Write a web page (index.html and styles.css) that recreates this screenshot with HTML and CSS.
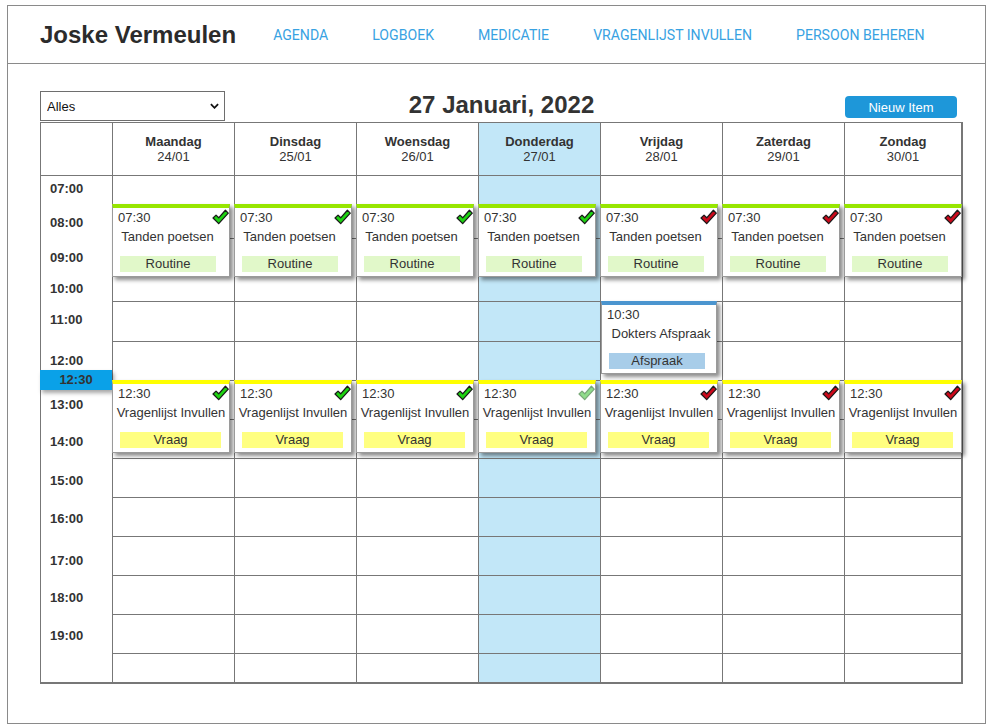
FILE: index.html
```html
<!DOCTYPE html>
<html lang="nl">

<head>
  <meta charset="UTF-8">
  <meta name="viewport" content="width=device-width, initial-scale=1.0">
  <title>Agenda - Joske Vermeulen</title>
  <link rel="stylesheet" href="styles.css">
</head>

<body>

  <svg class="defs" width="0" height="0">
    <symbol id="check" viewBox="0 0 16 16">
      <polygon points="1,8.5 3.8,5.8 6.3,8.3 12.6,1.2 15.3,3.9 6.3,13.8" />
    </symbol>
  </svg>

  <div class="page">

    <header class="topbar">
      <h1 class="user-name">Joske Vermeulen</h1>
      <nav class="nav">
        <a href="#">AGENDA</a>
        <a href="#">LOGBOEK</a>
        <a href="#">MEDICATIE</a>
        <a href="#">VRAGENLIJST INVULLEN</a>
        <a href="#">PERSOON BEHEREN</a>
      </nav>
    </header>

    <main class="content">

      <div class="toolbar">
        <div class="filter">
          <select id="filter">
            <option>Alles</option>
            <option>Routine</option>
            <option>Afspraak</option>
            <option>Vraag</option>
          </select>
          <svg class="chevron" viewBox="0 0 10 6"><path d="M1 1 L5 5 L9 1" /></svg>
        </div>
        <h2 class="week-title">27 Januari, 2022</h2>
        <button class="btn-new">Nieuw Item</button>
      </div>

      <div class="calendar">

        <!-- kop met dagen -->
        <div class="cal-head">
          <div class="head-cell"></div>
          <div class="head-cell"><b>Maandag</b><span>24/01</span></div>
          <div class="head-cell"><b>Dinsdag</b><span>25/01</span></div>
          <div class="head-cell"><b>Woensdag</b><span>26/01</span></div>
          <div class="head-cell today"><b>Donderdag</b><span>27/01</span></div>
          <div class="head-cell"><b>Vrijdag</b><span>28/01</span></div>
          <div class="head-cell"><b>Zaterdag</b><span>29/01</span></div>
          <div class="head-cell"><b>Zondag</b><span>30/01</span></div>
        </div>

        <div class="cal-body">

          <div class="times">
            <span>07:00</span><span>08:00</span><span>09:00</span><span>10:00</span>
            <span>11:00</span><span>12:00</span><span>13:00</span><span>14:00</span>
            <span>15:00</span><span>16:00</span><span>17:00</span><span>18:00</span>
            <span>19:00</span>
            <div class="now">12:30</div>
          </div>

          <!-- maandag -->
          <div class="day">
            <div class="slot tall"></div><div class="slot tall"></div><div class="slot mid"></div>
            <div class="slot"></div><div class="slot"></div><div class="slot"></div><div class="slot"></div>
            <div class="slot"></div><div class="slot"></div><div class="slot"></div><div class="slot"></div>
            <div class="slot last"></div>
            <div class="card routine t0730">
              <div class="card-time">07:30</div>
              <svg class="check done"><use href="#check" /></svg>
              <div class="card-title">Tanden poetsen</div>
              <div class="badge">Routine</div>
            </div>
            <div class="card vraag t1230">
              <div class="card-time">12:30</div>
              <svg class="check done"><use href="#check" /></svg>
              <div class="card-title">Vragenlijst Invullen</div>
              <div class="badge">Vraag</div>
            </div>
          </div>

          <!-- dinsdag -->
          <div class="day">
            <div class="slot tall"></div><div class="slot tall"></div><div class="slot mid"></div>
            <div class="slot"></div><div class="slot"></div><div class="slot"></div><div class="slot"></div>
            <div class="slot"></div><div class="slot"></div><div class="slot"></div><div class="slot"></div>
            <div class="slot last"></div>
            <div class="card routine t0730">
              <div class="card-time">07:30</div>
              <svg class="check done"><use href="#check" /></svg>
              <div class="card-title">Tanden poetsen</div>
              <div class="badge">Routine</div>
            </div>
            <div class="card vraag t1230">
              <div class="card-time">12:30</div>
              <svg class="check done"><use href="#check" /></svg>
              <div class="card-title">Vragenlijst Invullen</div>
              <div class="badge">Vraag</div>
            </div>
          </div>

          <!-- woensdag -->
          <div class="day">
            <div class="slot tall"></div><div class="slot tall"></div><div class="slot mid"></div>
            <div class="slot"></div><div class="slot"></div><div class="slot"></div><div class="slot"></div>
            <div class="slot"></div><div class="slot"></div><div class="slot"></div><div class="slot"></div>
            <div class="slot last"></div>
            <div class="card routine t0730">
              <div class="card-time">07:30</div>
              <svg class="check done"><use href="#check" /></svg>
              <div class="card-title">Tanden poetsen</div>
              <div class="badge">Routine</div>
            </div>
            <div class="card vraag t1230">
              <div class="card-time">12:30</div>
              <svg class="check done"><use href="#check" /></svg>
              <div class="card-title">Vragenlijst Invullen</div>
              <div class="badge">Vraag</div>
            </div>
          </div>

          <!-- donderdag (vandaag) -->
          <div class="day today">
            <div class="slot tall"></div><div class="slot tall"></div><div class="slot mid"></div>
            <div class="slot"></div><div class="slot"></div><div class="slot"></div><div class="slot"></div>
            <div class="slot"></div><div class="slot"></div><div class="slot"></div><div class="slot"></div>
            <div class="slot last"></div>
            <div class="card routine t0730">
              <div class="card-time">07:30</div>
              <svg class="check done"><use href="#check" /></svg>
              <div class="card-title">Tanden poetsen</div>
              <div class="badge">Routine</div>
            </div>
            <div class="card vraag t1230">
              <div class="card-time">12:30</div>
              <svg class="check open"><use href="#check" /></svg>
              <div class="card-title">Vragenlijst Invullen</div>
              <div class="badge">Vraag</div>
            </div>
          </div>

          <!-- vrijdag -->
          <div class="day">
            <div class="slot tall"></div><div class="slot tall"></div><div class="slot mid"></div>
            <div class="slot"></div><div class="slot"></div><div class="slot"></div><div class="slot"></div>
            <div class="slot"></div><div class="slot"></div><div class="slot"></div><div class="slot"></div>
            <div class="slot last"></div>
            <div class="card routine t0730">
              <div class="card-time">07:30</div>
              <svg class="check missed"><use href="#check" /></svg>
              <div class="card-title">Tanden poetsen</div>
              <div class="badge">Routine</div>
            </div>
            <div class="card afspraak t1030">
              <div class="card-time">10:30</div>
              <div class="card-title">Dokters Afspraak</div>
              <div class="badge">Afspraak</div>
            </div>
            <div class="card vraag t1230">
              <div class="card-time">12:30</div>
              <svg class="check missed"><use href="#check" /></svg>
              <div class="card-title">Vragenlijst Invullen</div>
              <div class="badge">Vraag</div>
            </div>
          </div>

          <!-- zaterdag -->
          <div class="day">
            <div class="slot tall"></div><div class="slot tall"></div><div class="slot mid"></div>
            <div class="slot"></div><div class="slot"></div><div class="slot"></div><div class="slot"></div>
            <div class="slot"></div><div class="slot"></div><div class="slot"></div><div class="slot"></div>
            <div class="slot last"></div>
            <div class="card routine t0730">
              <div class="card-time">07:30</div>
              <svg class="check missed"><use href="#check" /></svg>
              <div class="card-title">Tanden poetsen</div>
              <div class="badge">Routine</div>
            </div>
            <div class="card vraag t1230">
              <div class="card-time">12:30</div>
              <svg class="check missed"><use href="#check" /></svg>
              <div class="card-title">Vragenlijst Invullen</div>
              <div class="badge">Vraag</div>
            </div>
          </div>

          <!-- zondag -->
          <div class="day">
            <div class="slot tall"></div><div class="slot tall"></div><div class="slot mid"></div>
            <div class="slot"></div><div class="slot"></div><div class="slot"></div><div class="slot"></div>
            <div class="slot"></div><div class="slot"></div><div class="slot"></div><div class="slot"></div>
            <div class="slot last"></div>
            <div class="card routine t0730">
              <div class="card-time">07:30</div>
              <svg class="check missed"><use href="#check" /></svg>
              <div class="card-title">Tanden poetsen</div>
              <div class="badge">Routine</div>
            </div>
            <div class="card vraag t1230">
              <div class="card-time">12:30</div>
              <svg class="check missed"><use href="#check" /></svg>
              <div class="card-title">Vragenlijst Invullen</div>
              <div class="badge">Vraag</div>
            </div>
          </div>

        </div>
      </div>

    </main>
  </div>

</body>

</html>
```

FILE: styles.css
```css
* {
  box-sizing: border-box;
}

body {
  margin: 0;
  font-family: "Liberation Sans", Arial, sans-serif;
  color: #333;
  background: #fff;
}

.defs {
  position: absolute;
  width: 0;
  height: 0;
}

.page {
  margin: 5px 0 0 7px;
  width: 979px;
  height: 719px;
  border: 1px solid #8a8a8a;
}

/* kopbalk */
.topbar {
  display: flex;
  align-items: center;
  height: 58px;
  padding-left: 32px;
  border-bottom: 1px solid #8a8a8a;
}

.user-name {
  margin: 0;
  font-size: 24px;
  font-weight: bold;
  color: #2b2b2b;
}

.nav {
  display: flex;
  gap: 44px;
  margin-left: 37px;
}

.nav a {
  font-family: Roboto, "Liberation Sans", sans-serif;
  font-size: 14.1px;
  color: #38a2e2;
  text-decoration: none;
}

/* inhoud */
.content {
  padding: 27px 0 0 32px;
}

.toolbar {
  display: grid;
  grid-template-columns: 1fr auto 1fr;
  align-items: end;
  width: 923px;
  height: 30px;
  margin-bottom: 1px;
}

.filter {
  position: relative;
  width: 185px;
  height: 30px;
}

.filter select {
  appearance: none;
  width: 100%;
  height: 100%;
  padding: 0 6px;
  border: 1px solid #6e6e6e;
  border-radius: 0;
  background: #fff;
  font-family: "Liberation Sans", Arial, sans-serif;
  font-size: 13px;
  color: #111;
}

.chevron {
  position: absolute;
  right: 6px;
  top: 12px;
  width: 9px;
  height: 6px;
  fill: none;
  stroke: #111;
  stroke-width: 2;
  pointer-events: none;
}

.week-title {
  margin: 0 0 3px;
  font-size: 24px;
  line-height: 27px;
  font-weight: bold;
  color: #333;
}

.btn-new {
  justify-self: end;
  width: 112px;
  height: 22px;
  margin: 0 6px 3px 0;
  border: none;
  border-radius: 4px;
  background: #1e97d9;
  color: #fff;
  font-family: "Liberation Sans", Arial, sans-serif;
  font-size: 13px;
}

/* kalender */
.calendar {
  width: 923px;
  border: 1px solid #777;
  border-right-width: 2px;
  border-bottom-width: 2px;
}

.cal-head,
.cal-body {
  display: grid;
  grid-template-columns: 72px repeat(6, 122px) 1fr;
}

.cal-head {
  border-bottom: 1px solid #777;
}

.head-cell {
  display: flex;
  flex-direction: column;
  justify-content: center;
  align-items: center;
  height: 52px;
  border-right: 1px solid #777;
  font-size: 13px;
  line-height: 15px;
  color: #333;
}

.head-cell:last-child,
.day:last-child {
  border-right: none;
}

.today {
  background: #c2e7f8;
}

.times {
  position: relative;
  display: grid;
  grid-template-rows: 34px 35px 31px 31px 41px 44px 37px 39px 38px 42px 37px 38px 15px;
  align-content: start;
  padding: 5px 0 0 9px;
  border-right: 1px solid #777;
}

.times span {
  font-size: 13px;
  line-height: 15px;
  font-weight: bold;
  color: #333;
}

.now {
  position: absolute;
  top: 194px;
  left: -1px;
  width: 72px;
  height: 20px;
  background: #0aa1e8;
  box-shadow: 2px 3px 4px rgba(0, 0, 0, 0.35);
  font-size: 13px;
  font-weight: bold;
  line-height: 20px;
  text-align: center;
  color: #333;
}

.day {
  position: relative;
  border-right: 1px solid #777;
}

.slot {
  height: 39px;
  border-bottom: 1px solid #777;
}

.slot.tall {
  height: 63px;
}

.slot.mid {
  height: 40px;
}

.slot.last {
  height: 28px;
  border-bottom: none;
}

/* afspraken */
.card {
  position: absolute;
  left: -1px;
  width: 118px;
  padding: 2px 0 4px;
  background: #fff;
  border: 1px solid #9a9a9a;
  border-top: 4px solid #97e600;
  box-shadow: 3px 3px 4px rgba(0, 0, 0, 0.45);
  font-size: 13px;
  line-height: 16px;
  color: #333;
}

.t0730 {
  top: 28px;
}

.t1030 {
  top: 125px;
}

.t1230 {
  top: 204px;
}

.card-time {
  padding-left: 5px;
}

.card-title {
  margin-top: 3px;
  text-align: center;
  white-space: nowrap;
}

.card.routine .card-title {
  padding-right: 7px;
}

.badge {
  width: 96px;
  height: 16px;
  margin: 11px 0 0 7px;
  text-align: center;
  background: #e1f8c9;
}

.check {
  position: absolute;
  top: 1px;
  right: 0;
  width: 17px;
  height: 17px;
  stroke: #1a1a1a;
  stroke-width: 1.2;
  stroke-linejoin: round;
}

.check.done {
  fill: #1ed312;
}

.check.missed {
  fill: #cc0a1c;
}

.check.open {
  fill: #8fdc8a;
  stroke: #7aa87a;
}

.card.vraag {
  border-top-color: #ffff00;
}

.card.vraag .badge {
  width: 101px;
  background: #ffff80;
}

.card.afspraak {
  left: 0;
  width: 116px;
  border-top-color: #4b95cf;
}

.card.afspraak .card-title {
  padding-left: 4px;
}

.card.afspraak .badge {
  background: #a8cde9;
}
```
